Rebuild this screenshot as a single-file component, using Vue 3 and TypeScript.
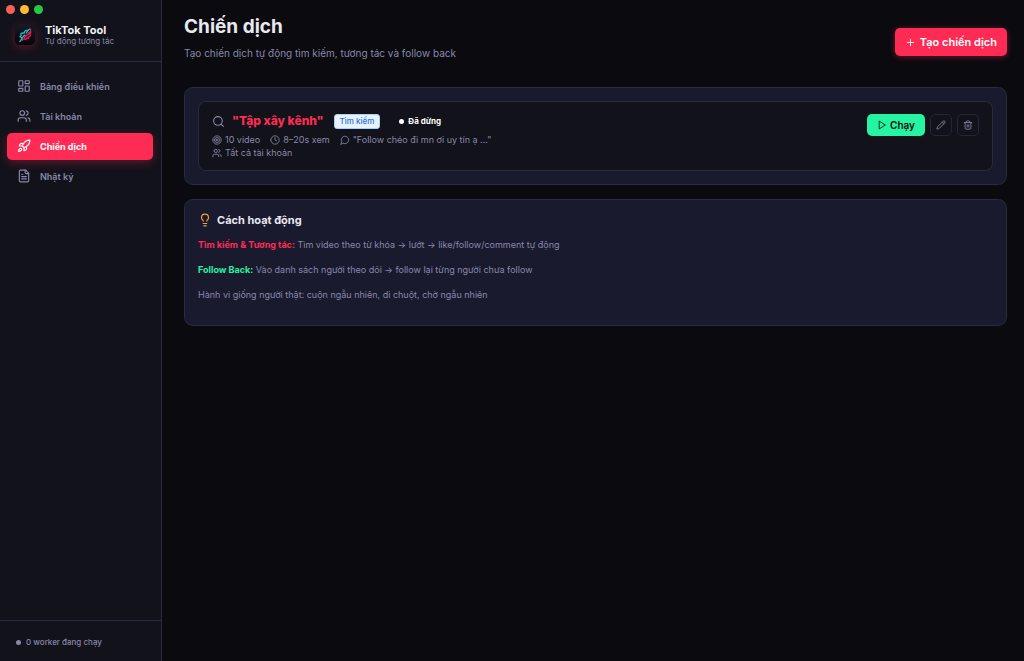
<script setup lang="ts">
import { ref } from 'vue'

type Shape = string[]

const icons: Record<string, Shape> = {
  dashboard: [
    'M4 3h5a1 1 0 0 1 1 1v7a1 1 0 0 1-1 1H4a1 1 0 0 1-1-1V4a1 1 0 0 1 1-1z',
    'M15 3h5a1 1 0 0 1 1 1v3a1 1 0 0 1-1 1h-5a1 1 0 0 1-1-1V4a1 1 0 0 1 1-1z',
    'M15 12h5a1 1 0 0 1 1 1v7a1 1 0 0 1-1 1h-5a1 1 0 0 1-1-1v-7a1 1 0 0 1 1-1z',
    'M4 16h5a1 1 0 0 1 1 1v3a1 1 0 0 1-1 1H4a1 1 0 0 1-1-1v-3a1 1 0 0 1 1-1z',
  ],
  users: [
    'M16 21v-2a4 4 0 0 0-4-4H6a4 4 0 0 0-4 4v2',
    'M5 7a4 4 0 1 0 8 0a4 4 0 1 0-8 0',
    'M22 21v-2a4 4 0 0 0-3-3.87',
    'M16 3.13a4 4 0 0 1 0 7.75',
  ],
  rocket: [
    'M4.5 16.5c-1.5 1.26-2 5-2 5s3.74-.5 5-2c.71-.84.7-2.13-.09-2.91a2.18 2.18 0 0 0-2.91-.09z',
    'm12 15-3-3a22 22 0 0 1 2-3.95A12.88 12.88 0 0 1 22 2c0 2.72-.78 7.5-6 11a22.35 22.35 0 0 1-4 2z',
    'M9 12H4s.55-3.03 2-4c1.62-1.08 5 0 5 0',
    'M12 15v5s3.03-.55 4-2c1.08-1.62 0-5 0-5',
  ],
  file: [
    'M15 2H6a2 2 0 0 0-2 2v16a2 2 0 0 0 2 2h12a2 2 0 0 0 2-2V7Z',
    'M14 2v4a2 2 0 0 0 2 2h4',
    'M10 9H8',
    'M16 13H8',
    'M16 17H8',
  ],
  plus: ['M5 12h14', 'M12 5v14'],
  search: ['M3 11a8 8 0 1 0 16 0a8 8 0 1 0-16 0', 'm21 21-4.3-4.3'],
  target: [
    'M2 12a10 10 0 1 0 20 0a10 10 0 1 0-20 0',
    'M6 12a6 6 0 1 0 12 0a6 6 0 1 0-12 0',
    'M10 12a2 2 0 1 0 4 0a2 2 0 1 0-4 0',
  ],
  clock: ['M2 12a10 10 0 1 0 20 0a10 10 0 1 0-20 0', 'M12 6v6l4 2'],
  message: ['M7.9 20A9 9 0 1 0 4 16.1L2 22Z'],
  play: ['m6 3 14 9-14 9z'],
  pencil: [
    'M21.17 6.81a1 1 0 0 0-3.99-3.99L3.84 16.17a2 2 0 0 0-.5.83l-1.32 4.35a.5.5 0 0 0 .62.62l4.35-1.32a2 2 0 0 0 .83-.5z',
    'm15 5 4 4',
  ],
  trash: [
    'M3 6h18',
    'M19 6v14c0 1-1 2-2 2H7c-1 0-2-1-2-2V6',
    'M8 6V4c0-1 1-2 2-2h4c1 0 2 1 2 2v2',
    'M10 11v6',
    'M14 11v6',
  ],
  bulb: [
    'M15 14c.2-1 .7-1.7 1.5-2.5 1-.9 1.5-2.2 1.5-3.5A6 6 0 0 0 6 8c0 1 .2 2.2 1.5 3.5.7.7 1.3 1.5 1.5 2.5',
    'M9 18h6',
    'M10 22h4',
  ],
}

const nav = [
  { id: 'dashboard', icon: 'dashboard', label: 'Bảng điều khiển' },
  { id: 'accounts', icon: 'users', label: 'Tài khoản' },
  { id: 'campaigns', icon: 'rocket', label: 'Chiến dịch' },
  { id: 'logs', icon: 'file', label: 'Nhật ký' },
]
const active = ref('campaigns')

const campaigns = [
  {
    name: '"Tập xây kênh"',
    type: 'Tìm kiếm',
    status: 'Đã dừng',
    meta: [
      { icon: 'target', text: '10 video' },
      { icon: 'clock', text: '8–20s xem' },
      { icon: 'message', text: '"Follow chéo đi mn ơi uy tín ạ ..."' },
    ],
    accounts: 'Tất cả tài khoản',
  },
]
</script>

<template>
  <div class="app">
    <aside class="sidebar">
      <div class="lights" aria-hidden="true">
        <span class="light close"></span>
        <span class="light min"></span>
        <span class="light max"></span>
      </div>
      <div class="brand">
        <svg class="logo" viewBox="0 0 20 20" aria-hidden="true">
          <defs>
            <linearGradient id="tile" x1="0" y1="0" x2="0" y2="1">
              <stop offset="0" stop-color="#161a24" />
              <stop offset="1" stop-color="#05060b" />
            </linearGradient>
          </defs>
          <rect width="20" height="20" rx="4" fill="url(#tile)" />
          <g fill="none" stroke-linecap="round" stroke-linejoin="round" stroke-width="1.3">
            <path stroke="#f0164f" d="M15.500 4.500l.2 3-1 1.200.8 1.300-.7 1.500-1 .3-.5 1.700-1.400-.6-1.200 1.500-1.500-.6-2 1.400M12.800 9.200l-3.300 3.300M14.200 7l-1 2.500" />
            <path stroke="#25b9bd" d="M4.800 16.600l2-2.600-.2-1.500-1.600-.8 1.200-1.400-.4-1.700 2-.8 1.300.5.600-2 1.600-1 1.500.2 2-1.600M6.800 13.500l2-2.700 1.300-.6M12.500 6.300l-1.200 1.500" />
          </g>
        </svg>
        <div class="brand-text">
          <strong>TikTok Tool</strong>
          <span>Tự động tương tác</span>
        </div>
      </div>
      <nav class="nav">
        <a
          v-for="item in nav"
          :key="item.id"
          :href="'#' + item.id"
          class="nav-item"
          :class="{ active: active === item.id }"
          :aria-current="active === item.id ? 'page' : undefined"
          @click.prevent="active = item.id"
        >
          <svg class="icon i14" viewBox="0 0 24 24" aria-hidden="true">
            <path v-for="d in icons[item.icon]" :key="d" :d="d" />
          </svg>
          <span>{{ item.label }}</span>
        </a>
      </nav>
      <div class="worker"><span class="dot"></span>0 worker đang chạy</div>
    </aside>

    <main class="main">
      <header class="head">
        <div>
          <h1>Chiến dịch</h1>
          <p>Tạo chiến dịch tự động tìm kiếm, tương tác và follow back</p>
        </div>
        <button type="button" class="create">
          <svg class="icon i11" viewBox="0 0 24 24" aria-hidden="true">
            <path v-for="d in icons.plus" :key="d" :d="d" />
          </svg>
          Tạo chiến dịch
        </button>
      </header>

      <section class="card">
        <article v-for="c in campaigns" :key="c.name" class="campaign">
          <div class="info">
            <div class="title">
              <svg class="icon i13" viewBox="0 0 24 24" aria-hidden="true">
                <path v-for="d in icons.search" :key="d" :d="d" />
              </svg>
              <h2>{{ c.name }}</h2>
              <span class="tag">{{ c.type }}</span>
              <span class="status"><span class="dot"></span>{{ c.status }}</span>
            </div>
            <ul class="meta">
              <li v-for="m in c.meta" :key="m.text">
                <svg class="icon i10" viewBox="0 0 24 24" aria-hidden="true">
                  <path v-for="d in icons[m.icon]" :key="d" :d="d" />
                </svg>
                {{ m.text }}
              </li>
            </ul>
            <div class="accounts">
              <svg class="icon i10" viewBox="0 0 24 24" aria-hidden="true">
                <path v-for="d in icons.users" :key="d" :d="d" />
              </svg>
              {{ c.accounts }}
            </div>
          </div>
          <div class="actions">
            <button type="button" class="run">
              <svg class="icon i10" viewBox="0 0 24 24" aria-hidden="true">
                <path v-for="d in icons.play" :key="d" :d="d" />
              </svg>
              Chạy
            </button>
            <button type="button" class="square" aria-label="Sửa">
              <svg class="icon i10" viewBox="0 0 24 24" aria-hidden="true">
                <path v-for="d in icons.pencil" :key="d" :d="d" />
              </svg>
            </button>
            <button type="button" class="square" aria-label="Xóa">
              <svg class="icon i10" viewBox="0 0 24 24" aria-hidden="true">
                <path v-for="d in icons.trash" :key="d" :d="d" />
              </svg>
            </button>
          </div>
        </article>
      </section>

      <section class="card how">
        <h3>
          <svg class="icon i14 amber" viewBox="0 0 24 24" aria-hidden="true">
            <path v-for="d in icons.bulb" :key="d" :d="d" />
          </svg>
          Cách hoạt động
        </h3>
        <p><b class="red">Tìm kiếm &amp; Tương tác:</b> Tìm video theo từ khóa → lướt → like/follow/comment tự động</p>
        <p><b class="green">Follow Back:</b> Vào danh sách người theo dõi → follow lại từng người chưa follow</p>
        <p>Hành vi giống người thật: cuộn ngẫu nhiên, di chuột, chờ ngẫu nhiên</p>
      </section>
    </main>
  </div>
</template>

<style>
body {
  background: #0a0a0f;
}
</style>

<style scoped>
* {
  box-sizing: border-box;
  margin: 0;
}
.app {
  display: flex;
  min-height: 100vh;
  font-family: Inter, "Noto Sans", sans-serif;
  font-size: 9px;
  color: #8888aa;
  background: #0a0a0f;
}
.icon {
  flex: none;
  fill: none;
  stroke: currentColor;
  stroke-width: 2;
  stroke-linecap: round;
  stroke-linejoin: round;
}
.i10 { width: 10px; height: 10px; }
.i11 { width: 11px; height: 11px; }
.i13 { width: 13px; height: 13px; }
.i14 { width: 14px; height: 14px; }

.sidebar {
  flex: none;
  display: flex;
  flex-direction: column;
  width: 162px;
  background: #12121a;
  border-right: 1px solid #2a2a40;
}
.lights {
  display: flex;
  gap: 5px;
  padding: 5px 6px 0;
}
.light {
  width: 9px;
  height: 9px;
  border-radius: 50%;
}
.close { background: #ff5f57; }
.min { background: #febc2e; }
.max { background: #28c840; }
.brand {
  display: flex;
  align-items: center;
  gap: 10px;
  padding: 10px 15px 15px;
  border-bottom: 1px solid #2a2a40;
}
.logo {
  width: 20px;
  height: 20px;
  border-radius: 5px;
  box-shadow: 0 2px 10px rgba(254, 44, 85, 0.3);
}
.brand-text strong,
.brand-text span {
  display: block;
}
.brand-text strong {
  font-size: 11px;
  line-height: 13px;
  color: #f0f0f8;
}
.brand-text span {
  font-size: 8px;
  line-height: 9px;
}
.nav {
  display: flex;
  flex-direction: column;
  gap: 3px;
  padding: 11px 8px 0 7px;
}
.nav-item {
  display: flex;
  align-items: center;
  gap: 9px;
  height: 27px;
  padding: 0 10px 1px;
  border-radius: 5px;
  font-size: 9px;
  font-weight: 600;
  color: #8888aa;
  text-decoration: none;
}
.nav-item.active {
  color: #fff;
  font-weight: 700;
  background: #fe2c55;
  box-shadow: 0 3px 10px rgba(254, 44, 85, 0.3);
}
.worker {
  display: flex;
  align-items: center;
  gap: 5px;
  margin-top: auto;
  height: 41px;
  padding: 2px 16px 0;
  border-top: 1px solid #2a2a40;
  font-size: 8px;
  font-weight: 500;
}
.dot {
  width: 5px;
  height: 5px;
  border-radius: 50%;
  background: currentColor;
}

.main {
  flex: 1;
  min-width: 0;
  padding: 15px 17px 22px 22px;
}
.head {
  display: flex;
  align-items: center;
  justify-content: space-between;
  margin-bottom: 18px;
}
.head > div {
  padding-bottom: 10px;
}
h1 {
  font-size: 19px;
  line-height: 24px;
  font-weight: 700;
  color: #e8e8f0;
}
.head p {
  margin-top: 8px;
  font-size: 10px;
  line-height: 12px;
}
button {
  display: flex;
  align-items: center;
  justify-content: center;
  border: 0;
  font-family: inherit;
  font-weight: 600;
  cursor: pointer;
}
.create {
  gap: 4px;
  height: 28px;
  padding: 0 10px;
  border-radius: 5px;
  font-size: 11px;
  color: #fff;
  background: #fe2c55;
  box-shadow: 0 1px 6px rgba(254, 44, 85, 0.4);
}
.card {
  padding: 13px;
  background: #1a1a2e;
  border: 1px solid #2a2a40;
  border-radius: 9px;
}
.card + .card {
  margin-top: 14px;
}
.campaign {
  display: flex;
  align-items: flex-start;
  justify-content: space-between;
  padding: 11px 13px;
  background: #12121a;
  border: 1px solid #2a2a40;
  border-radius: 8px;
}
.title {
  display: flex;
  align-items: center;
}
.title h2 {
  margin: 0 10px 0 7px;
  font-size: 12px;
  line-height: 16px;
  font-weight: 800;
  color: #fe2c55;
}
.tag {
  padding: 0 5px;
  border: 1px solid #a9d0f8;
  border-radius: 3px;
  font-size: 8px;
  line-height: 13px;
  font-weight: 500;
  color: #2f6fe0;
  background: #e6f3ff;
}
.status {
  display: flex;
  align-items: center;
  gap: 4px;
  margin-left: 19px;
  font-size: 8px;
  font-weight: 700;
  color: #fff;
}
.meta {
  display: flex;
  gap: 10px;
  margin-top: 4px;
  padding: 0;
  list-style: none;
}
.meta li,
.accounts {
  display: flex;
  align-items: center;
  gap: 3px;
  line-height: 13px;
}
.actions {
  display: flex;
  gap: 5px;
  padding-top: 1px;
}
.run {
  gap: 3px;
  height: 22px;
  padding: 0 10px;
  border-radius: 5px;
  font-size: 10px;
  color: #0a0a0f;
  background: #25f4a0;
}
.square {
  width: 22px;
  height: 22px;
  padding: 0;
  border: 1px solid #24243a;
  border-radius: 5px;
  color: #8888aa;
  background: transparent;
}
.how {
  padding-bottom: 22px;
}
.how h3 {
  display: flex;
  align-items: center;
  gap: 5px;
  margin-bottom: 10px;
  font-size: 11px;
  line-height: 14px;
  font-weight: 700;
  color: #e8e8f0;
}
.how p {
  line-height: 16px;
}
.how p + p {
  margin-top: 9px;
}
.amber { color: #f0a040; }
.red { color: #fe2c55; }
.green { color: #25f4a0; }
</style>
